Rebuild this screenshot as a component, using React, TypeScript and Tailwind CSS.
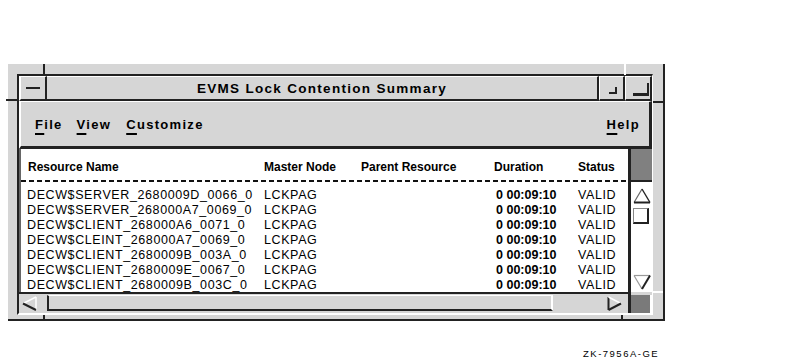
const ROWS = [
  'DECW$SERVER_2680009D_0066_0',
  'DECW$SERVER_268000A7_0069_0',
  'DECW$CLIENT_268000A6_0071_0',
  'DECW$CLEINT_268000A7_0069_0',
  'DECW$CLIENT_2680009B_003A_0',
  'DECW$CLIENT_2680009E_0067_0',
  'DECW$CLIENT_2680009B_003C_0',
]

function Mnemonic({ first, rest }: { first: string; rest: string }) {
  return (
    <span>
      <span className="underline decoration-[1.5px] underline-offset-[4px]">{first}</span>
      {rest}
    </span>
  )
}

function UpArrow() {
  return (
    <svg width="18" height="16" viewBox="0 0 18 16">
      <polygon points="9,1 17,14.5 1,14.5" fill="white" />
      <line x1="1" y1="14.5" x2="9" y2="1" stroke="#666" strokeWidth="1.2" />
      <line x1="9" y1="1" x2="17" y2="14.5" stroke="#222" strokeWidth="1.4" />
      <line x1="1" y1="14.5" x2="17" y2="14.5" stroke="#222" strokeWidth="2" />
    </svg>
  )
}

function DownArrow() {
  return (
    <svg width="18" height="16" viewBox="0 0 18 16">
      <line x1="1" y1="1.5" x2="17" y2="1.5" stroke="#999" strokeWidth="1.2" />
      <line x1="1" y1="1.5" x2="9" y2="15" stroke="#999" strokeWidth="1.2" />
      <line x1="17" y1="1.5" x2="9" y2="15" stroke="#222" strokeWidth="2" />
    </svg>
  )
}

function LeftArrow() {
  return (
    <svg width="15" height="15" viewBox="0 0 15 15">
      <line x1="1" y1="7.5" x2="14" y2="1" stroke="white" strokeWidth="1.5" />
      <line x1="14" y1="1" x2="14" y2="14" stroke="white" strokeWidth="1.5" />
      <line x1="1" y1="7.5" x2="14" y2="14" stroke="#222" strokeWidth="2" />
    </svg>
  )
}

function RightArrow() {
  return (
    <svg width="15" height="15" viewBox="0 0 15 15">
      <line x1="1.5" y1="1" x2="1.5" y2="14" stroke="#222" strokeWidth="2" />
      <line x1="1.5" y1="1" x2="14" y2="7.5" stroke="white" strokeWidth="1.5" />
      <line x1="14" y1="7.5" x2="1.5" y2="14" stroke="#222" strokeWidth="2" />
    </svg>
  )
}

export default function App() {
  return (
    <div className="h-[364px] w-[800px] overflow-hidden bg-white pl-[8px] pt-[64px] font-['Liberation_Sans',Arial,sans-serif] text-[#111]">
      <div className="relative h-[257px] w-[657px] border-r-2 border-b-2 border-[#222] bg-[#d6d6d6] pl-[9px] pt-[10px]">
        {/* resize corner ticks */}
        <div className="absolute left-[35px] top-0 h-[10px] w-[2px] bg-[#222]" />
        <div className="absolute left-[-2px] top-[35px] h-[2px] w-[11px] bg-[#222]" />
        <div className="absolute left-[616px] top-0 h-[11px] w-[2px] bg-white" />
        <div className="absolute left-[645px] top-[37px] h-[2px] w-[10px] bg-[#222]" />
        <div className="absolute left-[645px] top-[227px] h-[2px] w-[10px] bg-white" />
        <div className="absolute left-[35px] top-[251px] h-[6px] w-[2px] bg-[#222]" />
        <div className="absolute left-[613px] top-[251px] h-[6px] w-[2px] bg-[#222]" />

        <div className="flex h-[241px] w-[636px] flex-col border-t-2 border-r border-b-2 border-l-2 border-t-[#222] border-r-white border-b-white border-l-[#222]">
          {/* title bar */}
          <div className="flex h-[25px] shrink-0">
            <div className="grid w-[28px] place-items-center border-t border-r-2 border-b-2 border-l-2 border-t-white border-r-[#222] border-b-[#222] border-l-white">
              <div className="h-[2px] w-[14px] bg-[#222]" />
            </div>
            <div className="flex flex-1 items-center justify-center border-t border-r-2 border-b-2 border-t-white border-r-[#222] border-b-[#222] pt-[2px] text-[13.5px] font-bold leading-none tracking-[1.3px] text-black">
              EVMS Lock Contention Summary
            </div>
            <div className="w-[26px] border-t border-r-2 border-b-2 border-l border-t-white border-r-[#222] border-b-[#222] border-l-white pl-[9px] pt-[10px]">
              <div className="h-[7px] w-[8px] border-r-2 border-b-2 border-[#222]" />
            </div>
            <div className="w-[27px] border-t border-r-2 border-b-2 border-l border-t-white border-r-[#222] border-b-[#222] border-l-white pl-[7px] pt-[6px]">
              <div className="h-[13px] w-[16px] border-r-2 border-b-[3px] border-[#222]" />
            </div>
          </div>

          {/* menu bar */}
          <div className="flex h-[48px] shrink-0 items-start border-t border-r-[3px] border-b-[3px] border-l-2 border-t-white border-r-[#222] border-b-[#222] border-l-white pl-[14px] pr-[9px] pt-[15px] text-[13px] font-bold leading-[15px] tracking-[1.3px] text-black">
            <Mnemonic first="F" rest="ile" />
            <span className="ml-[14px]"><Mnemonic first="V" rest="iew" /></span>
            <span className="ml-[15px]"><Mnemonic first="C" rest="ustomize" /></span>
            <span className="ml-auto"><Mnemonic first="H" rest="elp" /></span>
          </div>

          {/* work area */}
          <div className="flex h-[164px] shrink-0">
            <div className="flex w-[609px] flex-col">
              <div className="h-[143px] overflow-hidden border-l-2 border-l-[#666] bg-white">
                <div className="grid h-[30px] grid-cols-[236px_97px_133px_84px_1fr] pl-[7px] pt-[11px] text-[12px] font-bold leading-[14px] text-black">
                  <div>Resource Name</div>
                  <div>Master Node</div>
                  <div>Parent Resource</div>
                  <div>Duration</div>
                  <div>Status</div>
                </div>
                <div className="mt-[1px] h-[2px] bg-[repeating-linear-gradient(90deg,#111_0_5px,transparent_5px_8px)]" />
                <div className="pl-[6px] pt-[6px] text-[12.5px] leading-[15px] tracking-[0.6px] text-black">
                  {ROWS.map((name) => (
                    <div key={name} className="grid h-[15px] grid-cols-[237px_97px_133px_84px_1fr] whitespace-nowrap">
                      <div>{name}</div>
                      <div>LCKPAG</div>
                      <div />
                      <div className="pl-[2px] font-bold tracking-normal">0 00:09:10</div>
                      <div>VALID</div>
                    </div>
                  ))}
                </div>
              </div>
              <div className="flex h-[21px] items-start border-t-2 border-[#222]">
                <div className="ml-[3px] mt-[2px]"><LeftArrow /></div>
                <div className="ml-[10px] mt-[1px] h-[16px] w-[506px] border-t border-r-2 border-b-2 border-l-2 border-t-white border-r-white border-b-[#222] border-l-[#222]" />
                <div className="ml-[54px] mt-[2px]"><RightArrow /></div>
              </div>
            </div>

            <div className="flex w-[24px] flex-col border-l-[3px] border-[#222]">
              <div className="h-[33px] border-b-2 border-[#222] bg-[#808080]" />
              <div className="flex h-[110px] flex-col items-start bg-white pl-[2px]">
                <div className="mt-[6px]"><UpArrow /></div>
                <div className="mt-[4px] h-[16px] w-[16px] border-t border-r-2 border-b-2 border-l border-t-[#888] border-r-[#222] border-b-[#222] border-l-[#888]" />
                <div className="mt-[50px]"><DownArrow /></div>
              </div>
              <div className="h-[21px] pt-[3px]">
                <div className="h-[18px] w-[21px] border-r-2 border-white bg-[#7a7a7a]" />
              </div>
            </div>
          </div>
        </div>
      </div>

      <div className="ml-[575px] mt-[28px] text-[9.5px] leading-[10px] tracking-[1.5px] text-black">ZK-7956A-GE</div>
    </div>
  )
}
